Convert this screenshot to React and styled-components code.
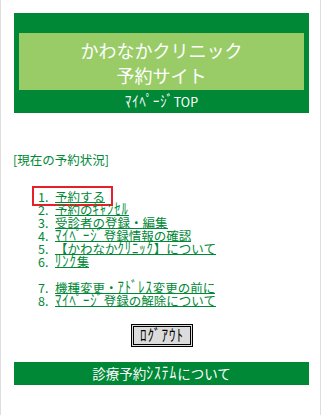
import React from 'react';
import styled, { createGlobalStyle } from 'styled-components';

const GREEN = '#008837';
const LIGHT = '#99cc66';

const Global = createGlobalStyle`
  html, body { margin: 0; padding: 0; background: #fff; }
  body { font-family: "Noto Sans CJK JP", "Noto Sans", sans-serif; }
`;

const menu = [
  { no: '1.', label: '予約する', marked: true },
  { no: '2.', label: '予約のｷｬﾝｾﾙ' },
  { no: '3.', label: '受診者の登録・編集' },
  { no: '4.', label: 'ﾏｲﾍﾟｰｼﾞ登録情報の確認' },
  { no: '5.', label: '【かわなかｸﾘﾆｯｸ】について' },
  { no: '6.', label: 'ﾘﾝｸ集' },
];

const menu2 = [
  { no: '7.', label: '機種変更・ｱﾄﾞﾚｽ変更の前に' },
  { no: '8.', label: 'ﾏｲﾍﾟｰｼﾞ登録の解除について' },
];

// half-width kana in Noto are short, stretch them like the old bitmap font
function kana(text) {
  return text.split(/([\uFF61-\uFF9F]+)/).map((part, i) =>
    /[\uFF61-\uFF9F]/.test(part) ? <Kana key={i}>{part}</Kana> : part
  );
}

export default function App() {
  return (
    <Page>
      <Global />
      <Header>
        <TitleBox>
          <span>かわなかクリニック</span>
          <span>予約サイト</span>
        </TitleBox>
        <SubTitle>{kana('ﾏｲﾍﾟｰｼﾞTOP')}</SubTitle>
      </Header>

      <Status>[現在の予約状況]</Status>

      <Menu>
        {menu.map(x => (
          <Row key={x.no} marked={x.marked}>
            <Num>{x.no}</Num>
            <Link href="#">{kana(x.label)}</Link>
          </Row>
        ))}
      </Menu>
      <Menu second>
        {menu2.map(x => (
          <Row key={x.no}>
            <Num>{x.no}</Num>
            <Link href="#">{kana(x.label)}</Link>
          </Row>
        ))}
      </Menu>

      <ButtonWrap>
        <Logout type="button">{kana('ﾛｸﾞｱｳﾄ')}</Logout>
      </ButtonWrap>

      <Footer>{kana('診療予約ｼｽﾃﾑについて')}</Footer>
    </Page>
  );
}

const Page = styled.div`
  width: 321px;
  min-height: 415px;
  box-sizing: border-box;
  border-left: 1px solid #dedede;
  border-right: 1px solid #dedede;
  padding-top: 13px;
  overflow: hidden;
`;

const Kana = styled.span`
  display: inline-block;
  letter-spacing: 1px;
  transform: scaleY(1.25);
  transform-origin: 50% 78%;
`;

const Header = styled.div`
  margin: 0 11px 0 13px;
  padding: 20px 5px 0;
  background: ${GREEN};
  color: #fff;
`;

const TitleBox = styled.div`
  height: 57px;
  background: ${LIGHT};
  display: flex;
  flex-direction: column;
  align-items: center;
  justify-content: center;
  padding-top: 3px;
  box-sizing: border-box;
  font-size: 18px;
  line-height: 25px;
`;

const SubTitle = styled.div`
  height: 23px;
  line-height: 23px;
  text-align: center;
  font-size: 12.5px;
`;

const Status = styled.div`
  margin: 39px 0 0 12px;
  line-height: 16px;
  font-size: 12.5px;
  color: ${GREEN};
`;

const Menu = styled.div`
  margin-top: ${p => (p.second ? '13px' : '22px')};
  padding-left: 36px;
  display: flex;
  flex-direction: column;
  align-items: flex-start;
`;

const Row = styled.div`
  position: relative;
  display: flex;
  height: 13px;
  line-height: 13px;
  font-size: 12.5px;
  color: ${GREEN};

  ${p =>
    p.marked &&
    `
    &::after {
      content: '';
      position: absolute;
      left: -5px;
      top: -4px;
      width: 77px;
      height: 16px;
      border: 2px solid #e5202a;
    }
  `}
`;

const Num = styled.span`
  width: 17px;
  padding-left: 1px;
`;

const Link = styled.a`
  display: inline-block;
  height: 12px;
  color: ${GREEN};
  text-decoration: none;
  border-bottom: 1px solid ${GREEN};
  white-space: nowrap;
`;

const ButtonWrap = styled.div`
  margin-top: 17px;
  padding-left: 130px;
  display: flex;
`;

const Logout = styled.button`
  width: 62px;
  height: 23px;
  padding: 0;
  border: 3px double #000;
  background: #dcdcdc;
  font-family: "Noto Sans CJK JP", sans-serif;
  font-size: 13px;
  line-height: 15px;
  color: #000;
`;

const Footer = styled.div`
  margin: 15px 11px 0 13px;
  height: 23px;
  line-height: 23px;
  background: ${GREEN};
  color: #fff;
  text-align: center;
  font-size: 13.5px;
`;
